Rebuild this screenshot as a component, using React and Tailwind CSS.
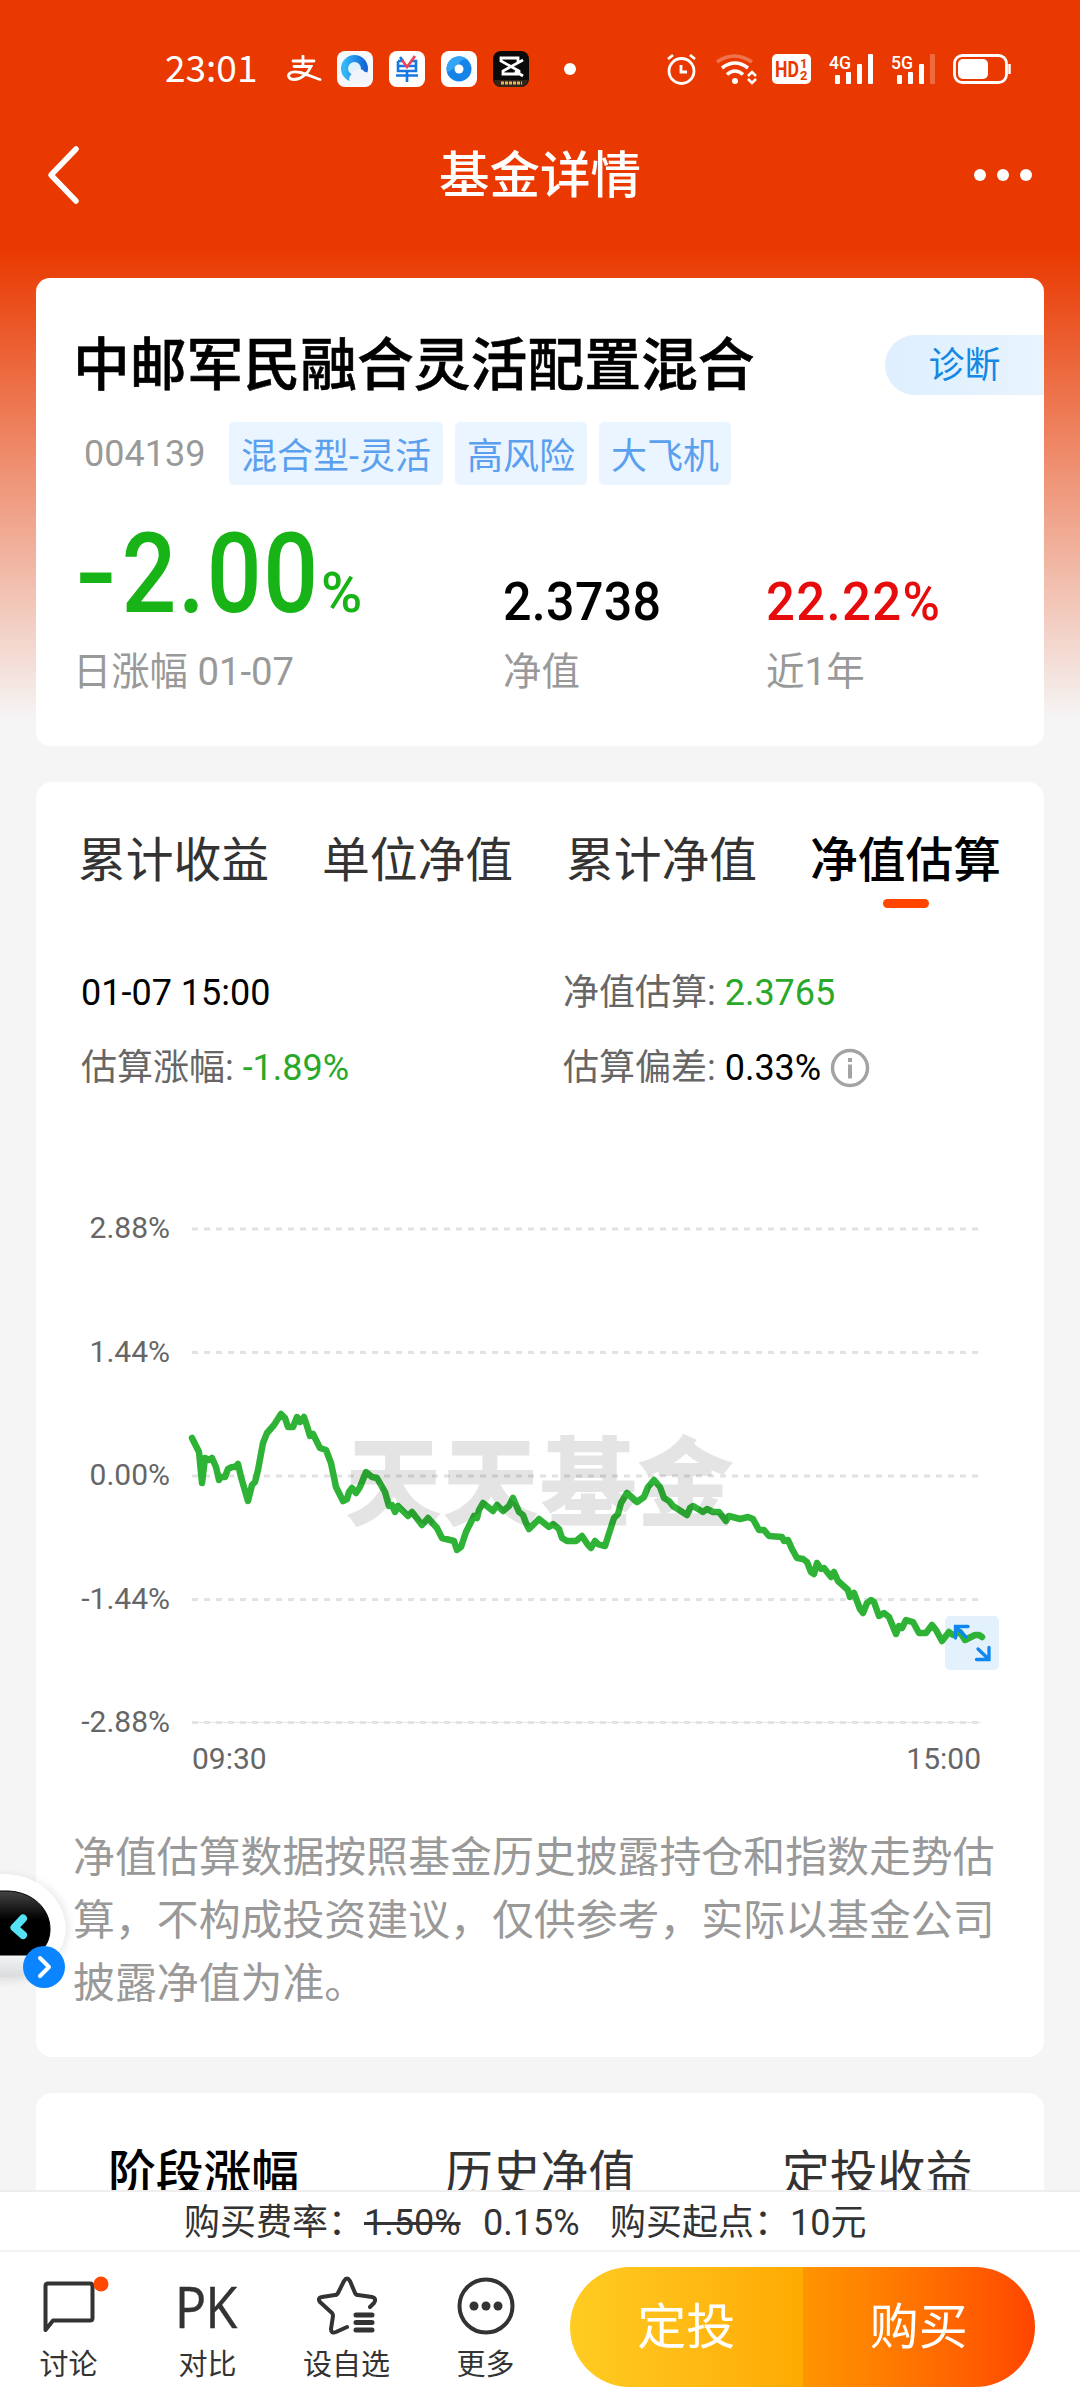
const TAGS = ['混合型-灵活', '高风险', '大飞机'];
const CHART_TABS = ['累计收益', '单位净值', '累计净值', '净值估算'];
const RECORD_TABS = ['阶段涨幅', '历史净值', '定投收益'];

const GRID = [
  { y: 1229, label: '2.88%' },
  { y: 1352.5, label: '1.44%' },
  { y: 1476, label: '0.00%' },
  { y: 1599.5, label: '-1.44%' },
  { y: 1722.5, label: '-2.88%' },
];

const LINE =
  '192,1438 199,1452 202,1483 205,1458 209,1460 212,1458 216,1467 219,1480 221,1477 225,1477 228,1469 232,1467 235,1467 238,1464 241,1477 248,1501 252,1485 255,1482 258,1470 263,1443 267,1433 274,1425 281,1414 285,1418 288,1427 293,1427 297,1417 300,1422 304,1417 307,1426 310,1436 313,1434 320,1448 326,1450 331,1463 336,1487 343,1501 347,1499 349,1492 352,1488 356,1493 360,1487 366,1472 372,1477 377,1478 385,1492 389,1506 392,1505 395,1512 398,1506 408,1516 412,1512 422,1525 428,1518 437,1528 442,1538 454,1541 457,1550 461,1547 466,1532 474,1516 477,1518 479,1510 483,1503 493,1511 497,1505 503,1511 509,1506 513,1498 519,1512 523,1515 526,1523 529,1529 539,1519 549,1527 553,1524 559,1529 562,1538 567,1541 576,1541 582,1536 588,1545 591,1548 595,1541 598,1544 605,1546 614,1518 618,1514 621,1503 627,1493 637,1502 644,1497 648,1487 654,1480 660,1487 664,1498 669,1501 673,1506 687,1515 690,1508 693,1506 703,1512 707,1509 713,1512 719,1512 726,1521 729,1516 740,1519 748,1517 753,1519 759,1530 764,1530 769,1536 782,1537 784,1541 788,1540 792,1549 797,1558 803,1559 807,1562 811,1572 814,1574 817,1563 821,1569 824,1568 831,1577 834,1572 838,1581 848,1590 850,1597 854,1593 860,1609 863,1613 867,1603 871,1600 874,1602 879,1616 884,1613 889,1617 896,1634 899,1626 902,1628 906,1620 913,1622 919,1633 926,1633 932,1625 936,1630 942,1641 949,1632 953,1635 960,1632 965,1640 975,1635 979,1635 982,1637';

function StatusBar() {
  return (
    <div className="flex h-[138px] shrink-0 items-center pl-[165px] pr-[68px] text-white">
      <span className="w-[121px] pb-[5px] font-['Noto_Sans_CJK_SC',sans-serif] text-[37px] leading-none">23:01</span>
      <svg width="36" height="28" viewBox="0 0 36 28" fill="none" stroke="currentColor" strokeWidth="2.8" strokeLinecap="round">
        <path d="M7 6h21M17 1v10M8 11.5h17c-3 7-10 13-17 13-6 0-7-5-3-7 7-3 19 4 29 7" />
      </svg>
      <svg className="ml-[15px]" width="36" height="36" viewBox="0 0 36 36">
        <defs>
          <linearGradient id="ring" x1="0" x2="1">
            <stop offset="0" stopColor="#32b8f8" />
            <stop offset="1" stopColor="#1567d8" />
          </linearGradient>
        </defs>
        <rect width="36" height="36" rx="8" fill="#f6f8fb" />
        <circle cx="17.5" cy="17.5" r="10" fill="#dff1fd" stroke="url(#ring)" strokeWidth="7" />
        <path d="M14 32a5.500 5.500 0 0 1 1-9 7.500 7.500 0 0 1 13-2c6 0 7 7 4 11z" fill="#f1f5fa" />
      </svg>
      <svg className="ml-[16px]" width="36" height="36" viewBox="0 0 36 36" fill="none" strokeWidth="2.6">
        <rect width="36" height="36" rx="8" fill="#fff" />
        <path d="M11 6l3 4M9 10v10h18V10h-4M9 10h6M9 15h18M7 24.500h22M18 20v11" stroke="#1677e0" />
        <path d="M13 9l5 7 8-11" stroke="#f0415c" />
      </svg>
      <svg className="ml-[16px]" width="36" height="36" viewBox="0 0 36 36">
        <rect width="36" height="36" rx="8" fill="#fff" />
        <circle cx="18" cy="18" r="12.500" fill="#1683e8" />
        <path d="M6 21A12.500 12.500 0 0 1 27 9c-6-2-9 2-9 5-4 0-5 5-12 7z" fill="#35a4f4" />
        <circle cx="18" cy="18" r="4.500" fill="#fff" />
      </svg>
      <svg className="ml-[16px]" width="36" height="36" viewBox="0 0 36 36" fill="none">
        <rect width="36" height="36" rx="8" fill="#0a0a0a" />
        <path d="M30 9L10 20v3h16v-3L8 10V7h17v4M30 25l-8-5" stroke="#fff" strokeWidth="2.8" />
        <path d="M1 29h34q-1 7-8 7H9q-7 0-8-7" fill="#33271c" />
        <path d="M8 32h21" stroke="#e5b657" strokeWidth="3" strokeDasharray="3 1" />
      </svg>
      <span className="ml-[35px] size-3 rounded-full bg-white" />

      <svg className="ml-auto" width="30" height="32" viewBox="0 0 30 32" fill="none" stroke="currentColor" strokeWidth="2.8">
        <circle cx="14.500" cy="18" r="12.500" />
        <path d="M14 12v7h6M1 6l5-4M28 6l-5-4" />
      </svg>
      <svg className="ml-[19px]" width="41" height="31" viewBox="0 0 41 31" fill="none" stroke="currentColor" strokeWidth="3.600">
        <path d="M1 8q17-12 35 0" opacity=".3" />
        <path d="M6 14q13-10 26 0M11 20.500q8-7 16 0" />
        <circle cx="19" cy="27" r="3" fill="currentColor" stroke="none" />
        <path d="M32 22l4-4 4 4M32 25l4 4 4-4" strokeWidth="2.500" />
      </svg>
      <svg className="ml-[15px]" width="39" height="30" viewBox="0 0 39 30">
        <rect width="39" height="30" rx="5" fill="currentColor" />
        <g fill="#e93900" className="font-[Roboto,sans-serif] font-bold">
          <text x="3" y="23" fontSize="22" textLength="24" lengthAdjust="spacingAndGlyphs">HD</text>
          <text x="28" y="13.500" fontSize="13">1</text>
          <text x="28" y="25.500" fontSize="13">2</text>
        </g>
      </svg>
      <Signal name="4G" />
      <Signal name="5G" weak />
      <svg className="ml-[18px]" width="59" height="30" viewBox="0 0 59 30" fill="none">
        <rect x="1.500" y="1.500" width="52" height="27" rx="8" stroke="currentColor" strokeWidth="2.800" />
        <rect x="5" y="5" width="30" height="20" rx="5" fill="currentColor" />
        <path d="M56.500 10v10" stroke="currentColor" strokeWidth="2.500" />
      </svg>
    </div>
  );
}

function Signal({ name, weak }) {
  return (
    <svg className="ml-[18px] overflow-visible" width="44" height="30" viewBox="0 0 44 30" fill="currentColor">
      <text x="0" y="14.500" fontSize="19" textLength="22" lengthAdjust="spacingAndGlyphs" className="font-[Roboto,sans-serif] font-medium">{name}</text>
      <rect x="6" y="21" width="5" height="9" rx="1" />
      <rect x="17" y="18" width="5" height="12" rx="1" />
      <rect x="28" y="10" width="5" height="20" rx="1" />
      <rect x="39" y="0" width="5" height="30" rx="1" opacity={weak ? 0.25 : 1} />
    </svg>
  );
}

function NavBar() {
  return (
    <div className="flex h-[74px] shrink-0 items-center justify-between pl-[46px] pr-[48px] text-white">
      <svg width="60" height="60" viewBox="0 0 60 60" fill="none" stroke="currentColor" strokeWidth="5.500" strokeLinecap="round" strokeLinejoin="round">
        <path d="M30 4L5 30l25 26" />
      </svg>
      <h1 className="pt-[3px] text-[50.500px] font-medium leading-none">基金详情</h1>
      <div className="flex w-[58px] gap-[11px]">
        <i className="size-3 shrink-0 rounded-full bg-white" />
        <i className="size-3 shrink-0 rounded-full bg-white" />
        <i className="size-3 shrink-0 rounded-full bg-white" />
      </div>
    </div>
  );
}

function Summary() {
  return (
    <section className="h-[468px] shrink-0 rounded-[14px] bg-white pl-[37px] pt-[57px]">
      <div className="flex h-[60px] items-center justify-between">
        <h2 className="pt-[3px] text-[56.800px] font-medium leading-none text-black [-webkit-text-stroke:0.6px_#000]">中邮军民融合灵活配置混合</h2>
        <button className="h-[60px] w-[159px] rounded-l-full bg-gradient-to-r from-[#dfefff] to-[#e8f4fd] pt-[2px] text-[36px] leading-none text-[#1588e6]">诊断</button>
      </div>
      <div className="mt-[27px] flex h-[63px] items-center gap-3 text-[36px] leading-none">
        <span className="w-[144px] pl-[11px] text-[#999]">004139</span>
        {TAGS.map((tag) => (
          <span key={tag} className="flex h-full items-center rounded-[5px] bg-[#eaf5ff] px-3 pt-[6px] text-[#5ba0ee]">{tag}</span>
        ))}
      </div>
      <div className="mt-[33px] flex">
        <div className="w-[430px]">
          <div className="flex h-[112px] items-baseline font-medium leading-[112px] text-[#17b317]">
            <span className="w-[248px] origin-left scale-x-[0.87] whitespace-nowrap pl-[3px] text-[111px] tracking-[2px]">
              <span className="mr-[13px] inline-block origin-left scale-x-[1.25]">-</span>2.00
            </span>
            <span className="text-[56px]">%</span>
          </div>
          <div className="mt-[22px] text-[38.300px] leading-[40px] text-[#999]">日涨幅 01-07</div>
        </div>
        <div className="w-[263px] pt-[57px]">
          <div className="origin-left scale-x-[0.93] text-[54px] font-medium leading-[54px] tracking-[0.300px] text-black">2.3738</div>
          <div className="mt-[23px] text-[38.500px] leading-[40px] text-[#999]">净值</div>
        </div>
        <div className="pt-[57px]">
          <div className="origin-left scale-x-[0.94] text-[54px] font-medium leading-[54px] tracking-[1.500px] text-[#e60c0c]">22.22%</div>
          <div className="mt-[23px] text-[38.500px] leading-[40px] text-[#999]">近1年</div>
        </div>
      </div>
    </section>
  );
}

function Chart() {
  return (
    <svg width="1008" height="590" viewBox="36 1200 1008 590" fill="none" className="block font-[Roboto,sans-serif]">
      {GRID.map(({ y, label }) => (
        <g key={label}>
          <text x="170" y={y + 9} textAnchor="end" fontSize="30" fill="#666">{label}</text>
          <path d={`M192 ${y}H980`} stroke="#e2e2e2" strokeWidth="3" strokeDasharray="6 6" />
        </g>
      ))}
      <path d="M192 1722.500H981" stroke="#e6e6e6" />
      <text x="192" y="1769" fontSize="30" fill="#666">09:30</text>
      <text x="981" y="1769" textAnchor="end" fontSize="30" fill="#666">15:00</text>
      <rect x="945" y="1616" width="54" height="54" rx="5" fill="#e3f1fd" />
      <polyline points={LINE} stroke="#2fb336" strokeWidth="6.500" strokeLinecap="round" strokeLinejoin="round" />
      <text x="345" y="1518" fontSize="97" fontWeight="900" fill="#000" opacity=".1" textLength="389" className="font-['Noto_Sans_CJK_SC',sans-serif]">天天基金</text>
      <path d="M955.500 1638v-11.500H968M956 1627l10 10M976.500 1659.500H989V1647.500M988.500 1659l-10.500-10" stroke="#0f87ee" strokeWidth="3.300" strokeLinecap="round" />
    </svg>
  );
}

function Estimate() {
  return (
    <section className="mt-9 h-[1275px] shrink-0 rounded-[16px] bg-white">
      <div className="flex gap-[51px] pl-[41px] pt-[54px]">
        {CHART_TABS.map((tab, i) => (
          <button key={tab} className={`flex w-[193px] flex-col items-center whitespace-nowrap text-[47.800px] leading-[50px] ${i === 3 ? 'font-medium text-black' : 'text-[#333]'}`}>
            {tab}
            <i className={`mt-[13px] h-[9px] w-[46px] rounded-full ${i === 3 ? 'bg-[#ff4500]' : ''}`} />
          </button>
        ))}
      </div>
      <div className="mt-[65px] grid grid-cols-[482px_1fr] gap-y-[35px] pl-[45px] text-[36px] leading-10 text-[#666]">
        <div className="text-black">01-07 15:00</div>
        <div>净值估算: <span className="text-[#29a829]">2.3765</span></div>
        <div>估算涨幅: <span className="text-[#29a829]">-1.89%</span></div>
        <div className="flex items-center">
          <span>估算偏差: <span className="text-black">0.33%</span></span>
          <svg className="ml-[9px]" width="40" height="40" viewBox="0 0 40 40" fill="none" stroke="#a3a3a3" strokeWidth="3.500">
            <circle cx="20" cy="20" r="17.500" />
            <path d="M20 16.500v14M20 10v4" strokeWidth="4" />
          </svg>
        </div>
      </div>
      <div className="mt-[112px]"><Chart /></div>
      <p className="ml-[37px] mt-[36px] w-[930px] text-[41.900px] leading-[63px] text-[#999]">
        净值估算数据按照基金历史披露持仓和指数走势估算，不构成投资建议，仅供参考，实际以基金公司披露净值为准。
      </p>
    </section>
  );
}

function Records() {
  return (
    <section className="mt-9 h-[300px] shrink-0 rounded-t-[16px] bg-white">
      <div className="flex gap-[144px] pl-[71px] pt-[56px] text-[47.800px] leading-[50px]">
        {RECORD_TABS.map((tab, i) => (
          <button key={tab} className={`w-[193px] whitespace-nowrap ${i === 0 ? 'font-medium text-black' : 'text-[#333]'}`}>{tab}</button>
        ))}
      </div>
    </section>
  );
}

function Action({ label, children }) {
  return (
    <button className="flex w-[139px] flex-col items-center text-[#333]">
      <span className="flex h-[60px] items-center">{children}</span>
      <span className="mt-[13px] text-[29px] leading-[32px]">{label}</span>
    </button>
  );
}

function BottomBar() {
  return (
    <footer className="h-[210px] shrink-0 border-t-2 border-[#eee] bg-white">
      <div className="flex h-[60px] items-center border-b-2 border-[#f3f3f3] pl-[184px] pt-[3px] text-[36px] leading-none text-[#333]">
        <span className="w-[180px]">购买费率：</span>
        <span className="w-[119px]"><s>1.50%</s></span>
        <span className="w-[127px]">0.15%</span>
        <span className="w-[180px]">购买起点：</span>
        <span>10元</span>
      </div>
      <div className="flex pt-[15px]">
        <div className="-ml-px flex pt-[9px]">
          <Action label="讨论">
            <svg className="overflow-visible" width="68" height="60" viewBox="0 0 68 60" fill="none">
              <path d="M10.500 54V10q0-2.500 2.500-2.500h42q2.500 0 2.500 2.500v32q0 2.500-2.500 2.500H18z" stroke="#333" strokeWidth="4" strokeLinejoin="round" />
              <circle cx="66" cy="8" r="7.500" fill="#ff4800" />
            </svg>
          </Action>
          <Action label="对比">
            <span className="-translate-x-[2px] scale-x-[0.92] font-['Open_Sans',sans-serif] text-[57px] leading-none tracking-[-1px] [-webkit-text-stroke:0.4px_#333]">PK</span>
          </Action>
          <Action label="设自选">
            <svg width="60" height="60" viewBox="0 0 60 60" fill="none" stroke="#333" strokeWidth="4" strokeLinecap="round" strokeLinejoin="round">
              <path d="M53 31l4-4q3-5-2-6l-14-2q-2 0-3-2L33 5q-3-5-6 0l-6 12q-1 2-3 2L5 21q-5 1-2 5l12 11q1 1 1 3l-2 13q0 5 5 3l11-5" />
              <path d="M39 39h16M39 46.500h16M39 54h16" strokeWidth="5" />
            </svg>
          </Action>
          <Action label="更多">
            <svg width="60" height="60" viewBox="0 0 60 60" fill="#333">
              <circle cx="30" cy="30" r="26.500" fill="none" stroke="#333" strokeWidth="4" />
              <circle cx="18" cy="30" r="4.500" />
              <circle cx="30" cy="30" r="4.500" />
              <circle cx="42" cy="30" r="4.500" />
            </svg>
          </Action>
        </div>
        <div className="ml-[15px] flex h-[120px] w-[465px] overflow-hidden rounded-full text-[49px] leading-none text-white">
          <button className="w-1/2 bg-gradient-to-r from-[#ffcc22] to-[#ffaa00]">定投</button>
          <button className="w-1/2 bg-gradient-to-r from-[#ff9500] to-[#ff4400]">购买</button>
        </div>
      </div>
    </footer>
  );
}

// assistant bubble docked at the left edge of the screen
function Assistant() {
  return (
    <svg className="absolute left-0 top-[1860px]" width="80" height="140" viewBox="0 0 80 140" fill="none">
      <defs>
        <linearGradient id="head" x1="0" y1="0" x2="0" y2="1">
          <stop offset="0.700" stopColor="#fff" />
          <stop offset="1" stopColor="#d9dbdd" />
        </linearGradient>
        <linearGradient id="visor" x1="0" y1="0" x2="0" y2="1">
          <stop offset="0" stopColor="#444" />
          <stop offset="0.450" stopColor="#000" />
        </linearGradient>
        <filter id="glow" x="-50%" y="-50%" width="200%" height="200%">
          <feGaussianBlur stdDeviation="5" />
        </filter>
      </defs>
      <path d="M-30 16H6q58 4 62 52-2 40-50 52h-48z" fill="#000" opacity=".1" filter="url(#glow)" />
      <path d="M-30 14H6c36 2 58 26 60 54-2 30-24 49-62 49h-34z" fill="url(#head)" />
      <path d="M-30 31H8c25 1 42 18 42 38 0 14-8 26-22 26h-58z" fill="url(#visor)" stroke="#000" />
      <path d="M23 58.500L14.500 67.500l8.500 7.500" stroke="#54e3f5" strokeWidth="8" strokeLinecap="round" strokeLinejoin="round" />
      <circle cx="44" cy="107" r="21" fill="#0a84ff" />
      <path d="M40 98l9 9-9 9" stroke="#fff" strokeWidth="4" strokeLinecap="round" strokeLinejoin="round" />
    </svg>
  );
}

export default function App() {
  return (
    <div className="relative flex h-[2400px] w-[1080px] flex-col overflow-hidden bg-[#f5f5f5] bg-[linear-gradient(#e93900_0px,#e93900_250px,#f5f5f5_720px)] font-[Roboto,'Noto_Sans_CJK_SC',sans-serif]">
      <StatusBar />
      <NavBar />
      <main className="flex min-h-0 flex-1 flex-col overflow-hidden px-9 pt-[66px]">
        <Summary />
        <Estimate />
        <Records />
      </main>
      <BottomBar />
      <Assistant />
    </div>
  );
}
